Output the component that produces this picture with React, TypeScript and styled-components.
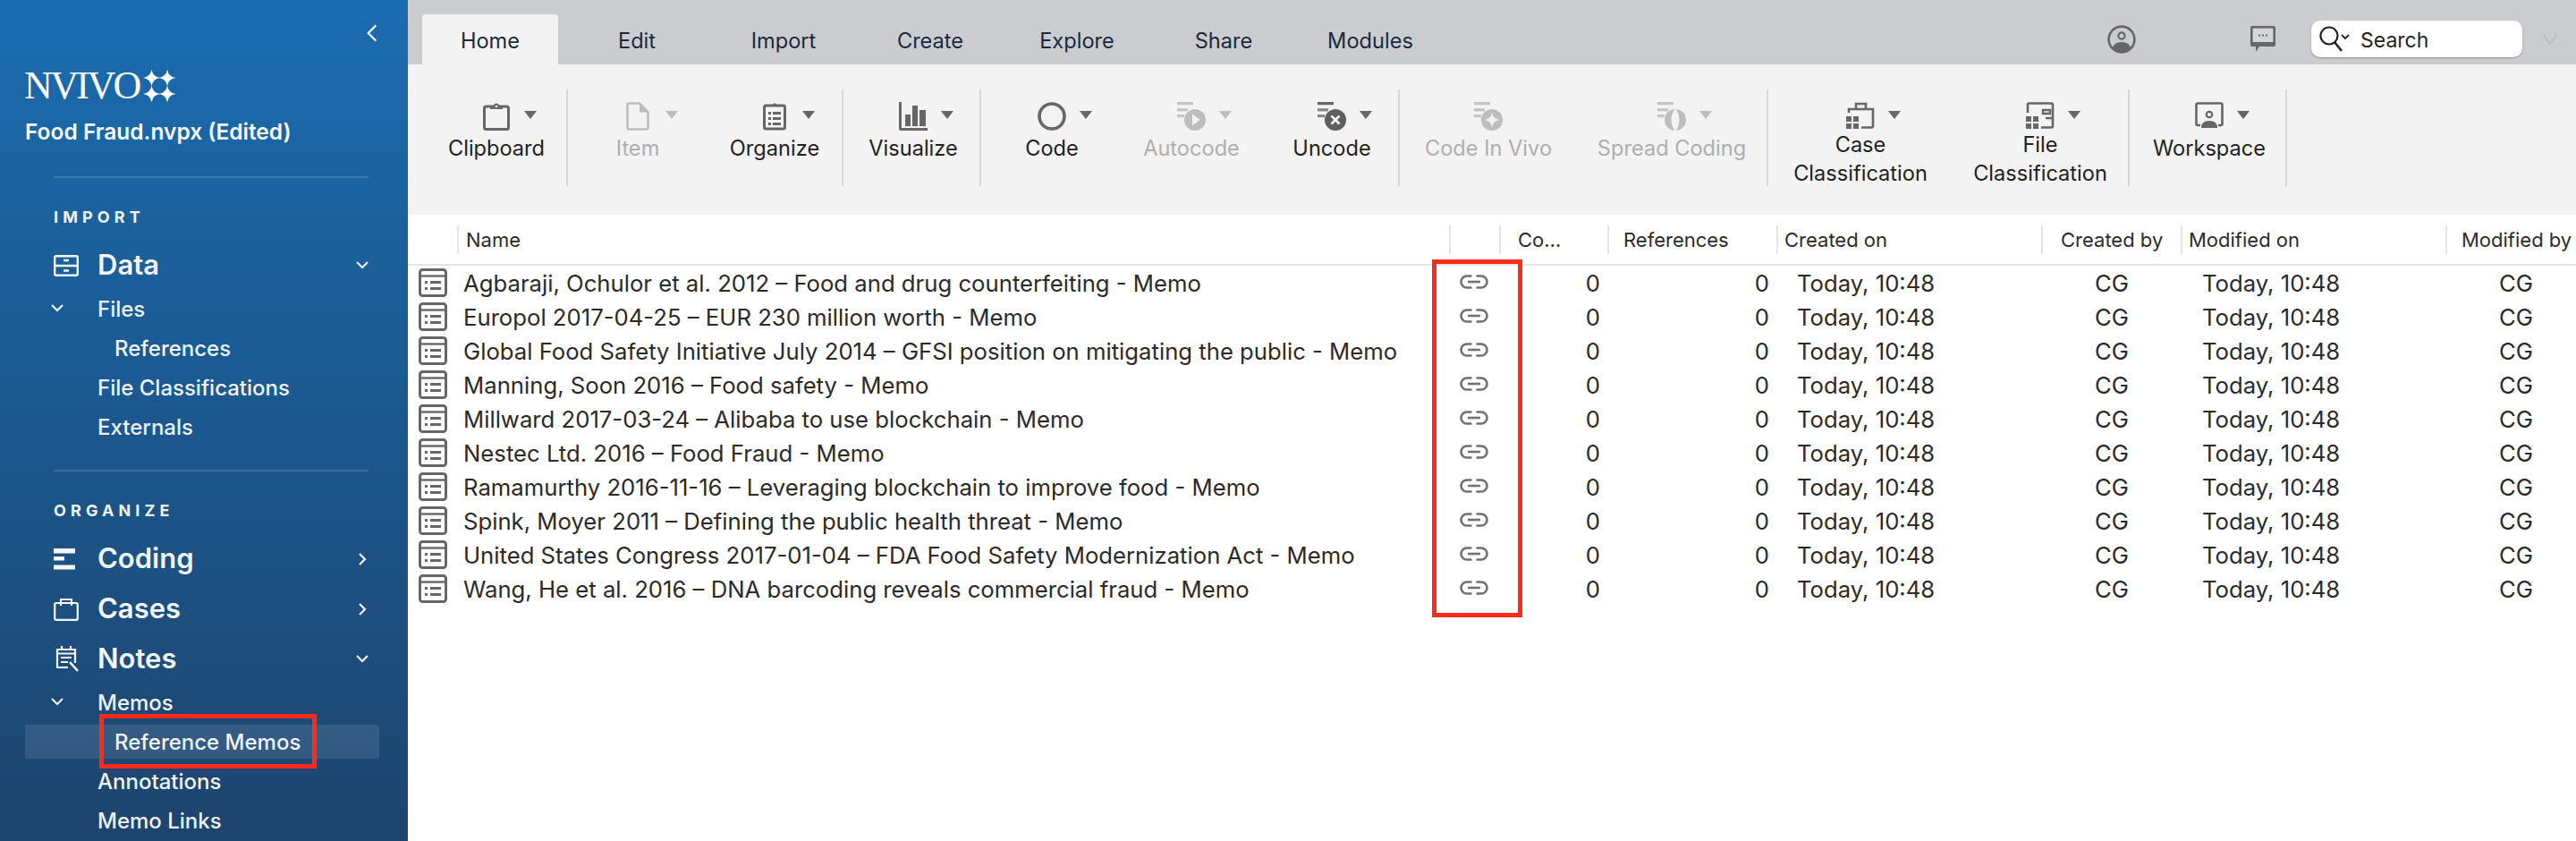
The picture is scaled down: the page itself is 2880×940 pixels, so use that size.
import React from "react";
import styled, { createGlobalStyle } from "styled-components";

const Global = createGlobalStyle`
  html, body { margin: 0; padding: 0; height: 100%; background: #fff; overflow: hidden; }
  #root { height: 100%; }
  * { box-sizing: border-box; }
`;

const Page = styled.div`
  position: relative;
  display: flex;
  width: 2880px;
  height: 940px;
  overflow: hidden;
  font-family: Inter, "Liberation Sans", sans-serif;
`;

/* ---------- sidebar ---------- */
const Sidebar = styled.aside`
  flex: 0 0 456px;
  height: 940px;
  overflow: hidden;
  color: #f2f5f9;
  background: linear-gradient(180deg, #1a6cb0 0%, #1d446d 100%);
`;
const CollapseRow = styled.div`
  height: 74px;
  display: flex;
  align-items: center;
  justify-content: flex-end;
  padding-right: 30px;
`;
const LogoRow = styled.div`
  height: 44px;
  display: flex;
  align-items: center;
  padding-left: 27px;
`;
const LogoText = styled.span`
  font-family: "Liberation Serif", serif;
  font-size: 44px;
  line-height: 44px;
  letter-spacing: -2.6px;
  color: #fff;
  font-weight: 400;
`;
const ProjectName = styled.div`
  height: 58px;
  line-height: 58px;
  padding-left: 28px;
  font-size: 24.5px;
  font-weight: 600;
  color: #f6f8fb;
`;
const Divider = styled.div`
  height: 2px;
  margin: ${(p: { $top: number }) => p.$top}px 44px 21px 60px;
  background: rgba(255, 255, 255, 0.14);
`;
const SectionTitle = styled.div`
  height: 44px;
  line-height: 46px;
  margin-bottom: 7px;
  padding-left: 60px;
  font-size: 18px;
  font-weight: 700;
  letter-spacing: 5.1px;
  color: #eef2f7;
`;
const MainRow = styled.div<{ $gap?: boolean }>`
  height: 52px;
  margin-top: ${(p) => (p.$gap ? 4 : 0)}px;
  display: flex;
  align-items: center;
  padding: 0 44px 0 60px;
`;
const MainIcon = styled.span`
  flex: 0 0 49px;
  display: flex;
  align-items: center;
`;
const MainLabel = styled.span`
  flex: 1;
  font-size: 31px;
  font-weight: 600;
  padding-bottom: 3px;
  color: #f2f5f9;
`;
const SubRow = styled.div<{ $level: number; $selected?: boolean }>`
  height: ${(p) => (p.$selected ? 38 : 44)}px;
  margin: ${(p) => (p.$selected ? "3px 32px 3px 28px" : "0")};
  display: flex;
  align-items: center;
  padding-left: ${(p) => (p.$selected ? 100 : p.$level === 2 ? 128 : 57)}px;
  font-size: 24px;
  font-weight: 500;
  color: #f0f3f8;
  border-radius: 2px;
  background: ${(p) => (p.$selected ? "rgba(255,255,255,0.1)" : "transparent")};
`;
const SubChevron = styled.span`
  flex: 0 0 52px;
  display: flex;
  align-items: center;
`;
const MemoHighlight = styled.div`
  position: absolute;
  left: 111px;
  top: 798px;
  width: 243px;
  height: 61px;
  border: 5px solid #ff2a1a;
`;

/* ---------- main ---------- */
const Main = styled.main`
  flex: 1;
  display: flex;
  flex-direction: column;
  min-width: 0;
`;
const TopBar = styled.div`
  height: 72px;
  background: #cbccd0;
  display: flex;
  padding-left: 16px;
`;
const Tabs = styled.div`
  display: flex;
  gap: 12px;
  padding-top: 16px;
`;
const Tab = styled.div<{ $active?: boolean }>`
  width: 152px;
  height: 56px;
  display: flex;
  align-items: center;
  justify-content: center;
  font-size: 23.6px;
  padding-top: 3px;
  color: #1b2a3c;
  border-radius: 4px 4px 0 0;
  background: ${(p) => (p.$active ? "#f3f3f3" : "transparent")};
`;
const TopRight = styled.div`
  margin-left: auto;
  display: flex;
  align-items: center;
  height: 72px;
  padding-top: 16px;
`;
const UserSlot = styled.span`
  display: flex;
  margin-right: 128px;
`;
const ChatSlot = styled.span`
  display: flex;
  margin-right: 40px;
`;
const SearchBox = styled.div`
  width: 236px;
  height: 41px;
  margin-top: -1px;
  background: #fff;
  border-radius: 10px;
  box-shadow: 0 1px 2px rgba(0, 0, 0, 0.3);
  display: flex;
  align-items: center;
  padding-left: 9px;
  gap: 12px;
  font-size: 23px;
  color: #222;
`;
const SearchLabel = styled.span`
  padding-top: 2px;
`;
const OverflowSlot = styled.span`
  display: flex;
  margin: 0 20px 0 22px;
`;

const Toolbar = styled.div`
  height: 168px;
  background: #f3f3f3;
  display: flex;
  align-items: flex-start;
  padding: 28px 0 0 21px;
`;
const ToolItem = styled.div<{ $w: number; $shift?: number; $sep?: boolean; $off?: boolean }>`
  width: ${(p) => p.$w}px;
  height: 108px;
  padding: 14px 0 0 ${(p) => p.$shift ?? 0}px;
  border-right: ${(p) => (p.$sep ? "2px solid #d8d8d8" : "none")};
  color: ${(p) => (p.$off ? "#aeaeae" : "#222")};
  display: flex;
  flex-direction: column;
  align-items: stretch;
  text-align: center;
`;
const IconRow = styled.div`
  display: grid;
  grid-template-columns: 1fr 32px 1fr;
  height: 32px;
`;
const IconCell = styled.span`
  grid-column: 2;
  display: flex;
  justify-content: center;
`;
const Caret = styled.span<{ $off?: boolean }>`
  grid-column: 3;
  margin: 10px 0 0 15px;
  width: 14px;
  height: 0;
  border-left: 7px solid transparent;
  border-right: 7px solid transparent;
  border-top: 9px solid ${(p) => (p.$off ? "#bdbdbd" : "#666")};
`;
const ToolLabel = styled.div<{ $two?: boolean }>`
  font-size: 23.6px;
  line-height: 32px;
  margin-top: ${(p) => (p.$two ? 0 : 4)}px;
`;

/* ---------- table ---------- */
const Table = styled.section`
  flex: 1;
  background: #fff;
`;
const columns = "55px 1109px 56px 121px 189px 296px 156px 296px 146px";
const HeaderRow = styled.div`
  display: grid;
  grid-template-columns: ${columns};
  height: 57px;
  padding-top: 12px;
  border-bottom: 2px solid #e5e5e5;
`;
const HeaderCell = styled.div<{ $pad: number; $plain?: boolean }>`
  height: 32px;
  line-height: 33px;
  white-space: nowrap;
  padding-left: ${(p) => p.$pad}px;
  border-left: ${(p) => (p.$plain ? "none" : "2px solid #e5e5e5")};
  font-size: 22px;
  color: #2b2b2b;
`;
const Row = styled.div`
  display: grid;
  grid-template-columns: ${columns};
  height: 38px;
  align-items: center;
  font-size: 25.7px;
  color: #2a2a2a;
`;
const RowIcon = styled.span`
  display: flex;
  padding-left: 12px;
`;
const NameCell = styled.span`
  padding-left: 7px;
  white-space: nowrap;
`;
const LinkCell = styled.span`
  display: flex;
  justify-content: center;
  padding-bottom: 2px;
`;
const NumCell = styled.span`
  text-align: right;
  padding-right: 8px;
`;
const TextCell = styled.span<{ $pad: number }>`
  padding-left: ${(p) => p.$pad}px;
  white-space: nowrap;
`;
const LinkHighlight = styled.div`
  position: absolute;
  left: 1601px;
  top: 290px;
  width: 101px;
  height: 400px;
  border: 5px solid #ff2a1a;
`;

/* ---------- icons ---------- */
const G = "#666";
const D = "#bdbdbd";
const W = "#f3f3f3";

const Chevron = ({ dir, size = 14, w = 2.2 }: { dir: "down" | "right" | "left"; size?: number; w?: number }) => {
  const d = dir === "down" ? "M1 3l6 6 6-6" : dir === "right" ? "M4 1l6 6-6 6" : "M10 1L4 7l6 6";
  return (
    <svg width={size} height={size} viewBox="0 0 14 14" fill="none" stroke="#eef2f7" strokeWidth={w}>
      <path d={d} />
    </svg>
  );
};

const LogoStars = styled.svg`
  margin-left: 4px;
`;
const Sparkles = () => {
  const s = "M0-9.5Q1.2-1.2 9.5 0 1.2 1.2 0 9.5-1.2 1.2-9.5 0-1.2-1.2 0-9.5z";
  return (
    <LogoStars width="37" height="36" viewBox="0 0 37 36" fill="#fff">
      <path d={s} transform="translate(9.5 9)" />
      <path d={s} transform="translate(27 9)" />
      <path d={s} transform="translate(9.5 27)" />
      <path d={s} transform="translate(27 27)" />
    </LogoStars>
  );
};

const DataIcon = () => (
  <svg width="28" height="24" viewBox="0 0 28 24" fill="none" stroke="#f2f5f9" strokeWidth="2.4">
    <rect x="1.2" y="1.2" width="25.6" height="21.6" rx="1.5" />
    <path d="M1 12h26M11 6h6M11 17.5h6" />
  </svg>
);
const CodingIcon = () => (
  <svg width="24" height="24" viewBox="0 0 24 24" fill="#f2f5f9">
    <rect x="0" y="0" width="24" height="5.5" />
    <rect x="0" y="9" width="12" height="4.5" />
    <rect x="0" y="18.5" width="24" height="5" />
  </svg>
);
const CasesIcon = () => (
  <svg width="28" height="26" viewBox="0 0 28 26" fill="none" stroke="#f2f5f9" strokeWidth="2.2">
    <rect x="1.2" y="6" width="25.6" height="18.8" rx="1.5" />
    <path d="M8 9V2h12v7" />
  </svg>
);
const NotesSvg = styled.svg`
  margin-left: 2px;
`;
const NotesIcon = () => (
  <NotesSvg width="28" height="30" viewBox="0 0 28 30" fill="none" stroke="#f2f5f9" strokeWidth="2.2">
    <path d="M22 19V4H2v20h12" />
    <path d="M7 0v5M17 0v5M2 8.5h20M6 13h12M6 18h8" />
    <path d="M16 18l9 10" strokeWidth="2.6" />
  </NotesSvg>
);

const ClipboardIcon = () => (
  <svg width="32" height="32" viewBox="0 0 32 32" fill="none">
    <rect x="2.5" y="5" width="27" height="25.5" rx="2" stroke={G} strokeWidth="3" />
    <path d="M9 8V4.5h4a3 3 0 0 1 6 0h4V8z" fill={G} />
    <circle cx="16" cy="5" r="1.3" fill={W} />
  </svg>
);
const ItemIcon = () => (
  <svg width="26" height="32" viewBox="0 0 26 32" fill="none">
    <path d="M3 1.5h12l9.5 10v17a2 2 0 0 1-2 2H3.5a2 2 0 0 1-2-2V3a1.5 1.5 0 0 1 1.5-1.5z" stroke={D} strokeWidth="2.6" />
    <path d="M15 1.5l9.5 10H15z" fill={D} />
  </svg>
);
const OrganizeIcon = () => (
  <svg width="26" height="32" viewBox="0 0 26 32" fill="none">
    <rect x="1.5" y="4" width="23" height="26" rx="2" stroke={G} strokeWidth="3" />
    <path d="M8 5l5-4 5 4z" fill={G} />
    <path d="M6 11h3v3H6zM6 17h3v3H6zM6 23h3v3H6zM11 11h9v3h-9zM11 17h9v3h-9zM11 23h9v3h-9z" fill={G} />
  </svg>
);
const VisualizeIcon = () => (
  <svg width="32" height="32" viewBox="0 0 32 32" fill={G}>
    <path d="M0 0h3v29h29v3H2a2 2 0 0 1-2-2z" />
    <rect x="7" y="14" width="6" height="13" />
    <rect x="15" y="4" width="6" height="23" />
    <rect x="23" y="9" width="7" height="18" />
  </svg>
);
const CodeIcon = () => (
  <svg width="32" height="32" viewBox="0 0 32 32" fill="none">
    <circle cx="16" cy="16" r="14" stroke={G} strokeWidth="3.6" />
  </svg>
);
const Lines = ({ c, top }: { c: string; top?: string }) => (
  <>
    <rect x="0" y="0" width="18" height="3.2" fill={top ?? c} />
    <rect x="0" y="7.2" width="12" height="3.2" fill={c} />
    <rect x="0" y="14" width="8" height="3.2" fill={c} />
  </>
);
const AutocodeIcon = () => (
  <svg width="32" height="32" viewBox="0 0 32 32">
    <Lines c="#c4c4c4" top="#c4c4c4" />
    <circle cx="20" cy="20" r="12" fill={D} />
    <path d="M17 13.5l8.5 6.5-8.5 6.5z" fill={W} />
  </svg>
);
const UncodeIcon = () => (
  <svg width="32" height="32" viewBox="0 0 32 32">
    <Lines c="#858585" top="#666" />
    <circle cx="20" cy="20" r="12" fill="#5f5f5f" />
    <path d="M15.5 15.5l9 9M24.5 15.5l-9 9" stroke={W} strokeWidth="2.6" />
  </svg>
);
const CodeInVivoIcon = () => (
  <svg width="32" height="32" viewBox="0 0 32 32">
    <Lines c="#c4c4c4" />
    <circle cx="20" cy="20" r="12" fill={D} />
    <path d="M20 11.5Q21 19 28.5 20 21 21 20 28.5 19 21 11.5 20 19 19 20 11.5z" fill={W} />
  </svg>
);
const SpreadIcon = () => (
  <svg width="32" height="32" viewBox="0 0 32 32">
    <Lines c="#c4c4c4" />
    <circle cx="20" cy="20" r="12" fill={D} />
    <path d="M20 7q-4.5 6-4.5 13t4.5 13q4.5-6 4.5-13t-4.5-13z" fill={W} />
  </svg>
);
const Dots = ({ c }: { c: string }) => (
  <path d="M0 16h6v6H0zM8 16h6v6H8zM0 24h6v6H0zM8 24h6v6H8z" fill={c} />
);
const CaseClassIcon = () => (
  <svg width="32" height="32" viewBox="0 0 32 32" fill="none">
    <Dots c={G} />
    <path d="M3 12V8h27v19a1.5 1.5 0 0 1-1.5 1.5H17" stroke={G} strokeWidth="2.6" />
    <path d="M11 8V2h11v6" stroke={G} strokeWidth="2.6" />
  </svg>
);
const FileClassIcon = () => (
  <svg width="32" height="32" viewBox="0 0 32 32" fill="none">
    <Dots c={G} />
    <path d="M2 12V3a1.5 1.5 0 0 1 1.5-1.5h25A1.5 1.5 0 0 1 30 3v24a1.5 1.5 0 0 1-1.5 1.5H17" stroke={G} strokeWidth="2.6" />
    <path d="M19 9h8v4h-8zM22 18h8" stroke={G} strokeWidth="2.4" />
  </svg>
);
const WorkspaceIcon = () => (
  <svg width="32" height="32" viewBox="0 0 32 32" fill="none">
    <path d="M6 26H3a1.5 1.5 0 0 1-1.5-1.5V3A1.5 1.5 0 0 1 3 1.5h26A1.5 1.5 0 0 1 30.5 3v21.5A1.5 1.5 0 0 1 29 26h-3" stroke={G} strokeWidth="2.6" />
    <circle cx="16" cy="14" r="3.2" stroke={G} strokeWidth="2.2" />
    <path d="M7 29q0-8 9-8t9 8z" fill={G} />
  </svg>
);
const UserIcon = () => (
  <svg width="32" height="32" viewBox="0 0 32 32" fill="none">
    <circle cx="16" cy="16" r="14.4" stroke={G} strokeWidth="2.6" />
    <circle cx="16" cy="12" r="3.6" stroke={G} strokeWidth="2.2" />
    <path d="M6 25q2-6 10-6t10 6q-4 5-10 5T6 25z" fill={G} />
  </svg>
);
const ChatIcon = () => (
  <svg width="28" height="30" viewBox="0 0 28 30">
    <path d="M2 0h24a2 2 0 0 1 2 2v19a2 2 0 0 1-2 2H10l-4 6v-6H2a2 2 0 0 1-2-2V2a2 2 0 0 1 2-2z" fill={G} />
    <rect x="2.6" y="2.6" width="22.8" height="15.4" fill="#d4d5d8" />
    <path d="M9 9.5h2v2H9zM13 9.5h2v2h-2zM17 9.5h2v2h-2z" fill={G} />
  </svg>
);
const SearchIcon = () => (
  <svg width="34" height="30" viewBox="0 0 34 30" fill="none" stroke="#222">
    <circle cx="11" cy="11" r="9.5" strokeWidth="2.2" />
    <path d="M17 18l8 10" strokeWidth="2.6" />
    <path d="M25 10l4 4 4-4" strokeWidth="1.8" />
  </svg>
);
const OverflowChevron = () => (
  <svg width="18" height="14" viewBox="0 0 18 14" fill="none" stroke="#bdbec2" strokeWidth="2">
    <path d="M1 1l8 11 8-11" />
  </svg>
);
const MemoIcon = () => (
  <svg width="32" height="32" viewBox="0 0 32 32" fill="none">
    <rect x="1.5" y="1.5" width="29" height="29" rx="3" stroke={G} strokeWidth="3" />
    <path d="M2 8.5h28" stroke={G} strokeWidth="2.4" />
    <path d="M7 14h3v3H7zM13 14h12v3H13zM7 21h3v3H7zM13 21h12v3H13z" fill={G} />
  </svg>
);
const LinkIcon = () => (
  <svg width="32" height="16" viewBox="0 0 32 16" fill="none" stroke="#707070" strokeWidth="2.6">
    <path d="M13.5 1.5H8a6.5 6.5 0 0 0 0 13h5.5M18.5 1.5H24a6.5 6.5 0 0 1 0 13h-5.5" />
    <path d="M9 8h14" />
  </svg>
);

/* ---------- data ---------- */
type Tool = {
  label: string;
  lines?: [string, string];
  icon: React.ReactNode;
  w: number;
  shift?: number;
  sep?: boolean;
  off?: boolean;
  noCaret?: boolean;
};
const tools: Tool[] = [
  { label: "Clipboard", icon: <ClipboardIcon />, w: 158, sep: true },
  { label: "Item", icon: <ItemIcon />, w: 156, off: true },
  { label: "Organize", icon: <OrganizeIcon />, w: 152, sep: true },
  { label: "Visualize", icon: <VisualizeIcon />, w: 154, shift: 4, sep: true },
  { label: "Code", icon: <CodeIcon />, w: 158 },
  { label: "Autocode", icon: <AutocodeIcon />, w: 154, off: true },
  { label: "Uncode", icon: <UncodeIcon />, w: 156, shift: 6, sep: true },
  { label: "Code In Vivo", icon: <CodeInVivoIcon />, w: 198, off: true, noCaret: true },
  { label: "Spread Coding", icon: <SpreadIcon />, w: 214, sep: true, off: true },
  { label: "Case", lines: ["Case", "Classification"], icon: <CaseClassIcon />, w: 206 },
  { label: "File", lines: ["File", "Classification"], icon: <FileClassIcon />, w: 198, sep: true },
  { label: "Workspace", icon: <WorkspaceIcon />, w: 176, shift: 4, sep: true },
];

const memos = [
  "Agbaraji, Ochulor et al. 2012 – Food and drug counterfeiting - Memo",
  "Europol 2017-04-25 – EUR 230 million worth - Memo",
  "Global Food Safety Initiative July 2014 – GFSI position on mitigating the public - Memo",
  "Manning, Soon 2016 – Food safety - Memo",
  "Millward 2017-03-24 – Alibaba to use blockchain - Memo",
  "Nestec Ltd. 2016 – Food Fraud - Memo",
  "Ramamurthy 2016-11-16 – Leveraging blockchain to improve food - Memo",
  "Spink, Moyer 2011 – Defining the public health threat - Memo",
  "United States Congress 2017-01-04 – FDA Food Safety Modernization Act - Memo",
  "Wang, He et al. 2016 – DNA barcoding reveals commercial fraud - Memo",
];

const headers = [
  { t: "", pad: 0, plain: true },
  { t: "Name", pad: 8 },
  { t: "", pad: 0 },
  { t: "Co…", pad: 19 },
  { t: "References", pad: 16 },
  { t: "Created on", pad: 7 },
  { t: "Created by", pad: 20 },
  { t: "Modified on", pad: 7 },
  { t: "Modified by", pad: 16 },
];

const tabs = ["Home", "Edit", "Import", "Create", "Explore", "Share", "Modules"];

export default function App() {
  return (
    <Page>
      <Global />
      <Sidebar>
        <CollapseRow>
          <Chevron dir="left" size={20} w={1.6} />
        </CollapseRow>
        <LogoRow>
          <LogoText>NVIVO</LogoText>
          <Sparkles />
        </LogoRow>
        <ProjectName>Food Fraud.nvpx (Edited)</ProjectName>
        <Divider $top={21} />
        <SectionTitle>IMPORT</SectionTitle>
        <MainRow>
          <MainIcon><DataIcon /></MainIcon>
          <MainLabel>Data</MainLabel>
          <Chevron dir="down" />
        </MainRow>
        <SubRow $level={1}>
          <SubChevron><Chevron dir="down" /></SubChevron>
          Files
        </SubRow>
        <SubRow $level={2}>References</SubRow>
        <SubRow $level={1}>
          <SubChevron />
          File Classifications
        </SubRow>
        <SubRow $level={1}>
          <SubChevron />
          Externals
        </SubRow>
        <Divider $top={26} />
        <SectionTitle>ORGANIZE</SectionTitle>
        <MainRow>
          <MainIcon><CodingIcon /></MainIcon>
          <MainLabel>Coding</MainLabel>
          <Chevron dir="right" />
        </MainRow>
        <MainRow $gap>
          <MainIcon><CasesIcon /></MainIcon>
          <MainLabel>Cases</MainLabel>
          <Chevron dir="right" />
        </MainRow>
        <MainRow $gap>
          <MainIcon><NotesIcon /></MainIcon>
          <MainLabel>Notes</MainLabel>
          <Chevron dir="down" />
        </MainRow>
        <SubRow $level={1}>
          <SubChevron><Chevron dir="down" /></SubChevron>
          Memos
        </SubRow>
        <SubRow $level={2} $selected>Reference Memos</SubRow>
        <SubRow $level={1}>
          <SubChevron />
          Annotations
        </SubRow>
        <SubRow $level={1}>
          <SubChevron />
          Memo Links
        </SubRow>
      </Sidebar>

      <Main>
        <TopBar>
          <Tabs>
            {tabs.map((t, i) => (
              <Tab key={t} $active={i === 0}>{t}</Tab>
            ))}
          </Tabs>
          <TopRight>
            <UserSlot><UserIcon /></UserSlot>
            <ChatSlot><ChatIcon /></ChatSlot>
            <SearchBox>
              <SearchIcon />
              <SearchLabel>Search</SearchLabel>
            </SearchBox>
            <OverflowSlot><OverflowChevron /></OverflowSlot>
          </TopRight>
        </TopBar>

        <Toolbar>
          {tools.map((t) => (
            <ToolItem key={t.label} $w={t.w} $shift={t.shift} $sep={t.sep} $off={t.off}>
              <IconRow>
                <IconCell>{t.icon}</IconCell>
                {!t.noCaret && <Caret $off={t.off} />}
              </IconRow>
              {t.lines ? (
                <>
                  <ToolLabel $two>{t.lines[0]}</ToolLabel>
                  <ToolLabel $two>{t.lines[1]}</ToolLabel>
                </>
              ) : (
                <ToolLabel>{t.label}</ToolLabel>
              )}
            </ToolItem>
          ))}
        </Toolbar>

        <Table>
          <HeaderRow>
            {headers.map((h, i) => (
              <HeaderCell key={i} $pad={h.pad} $plain={h.plain}>{h.t}</HeaderCell>
            ))}
          </HeaderRow>
          {memos.map((m) => (
            <Row key={m}>
              <RowIcon><MemoIcon /></RowIcon>
              <NameCell>{m}</NameCell>
              <LinkCell><LinkIcon /></LinkCell>
              <NumCell>0</NumCell>
              <NumCell>0</NumCell>
              <TextCell $pad={23}>Today, 10:48</TextCell>
              <TextCell $pad={60}>CG</TextCell>
              <TextCell $pad={24}>Today, 10:48</TextCell>
              <TextCell $pad={60}>CG</TextCell>
            </Row>
          ))}
        </Table>
      </Main>

      <MemoHighlight />
      <LinkHighlight />
    </Page>
  );
}
